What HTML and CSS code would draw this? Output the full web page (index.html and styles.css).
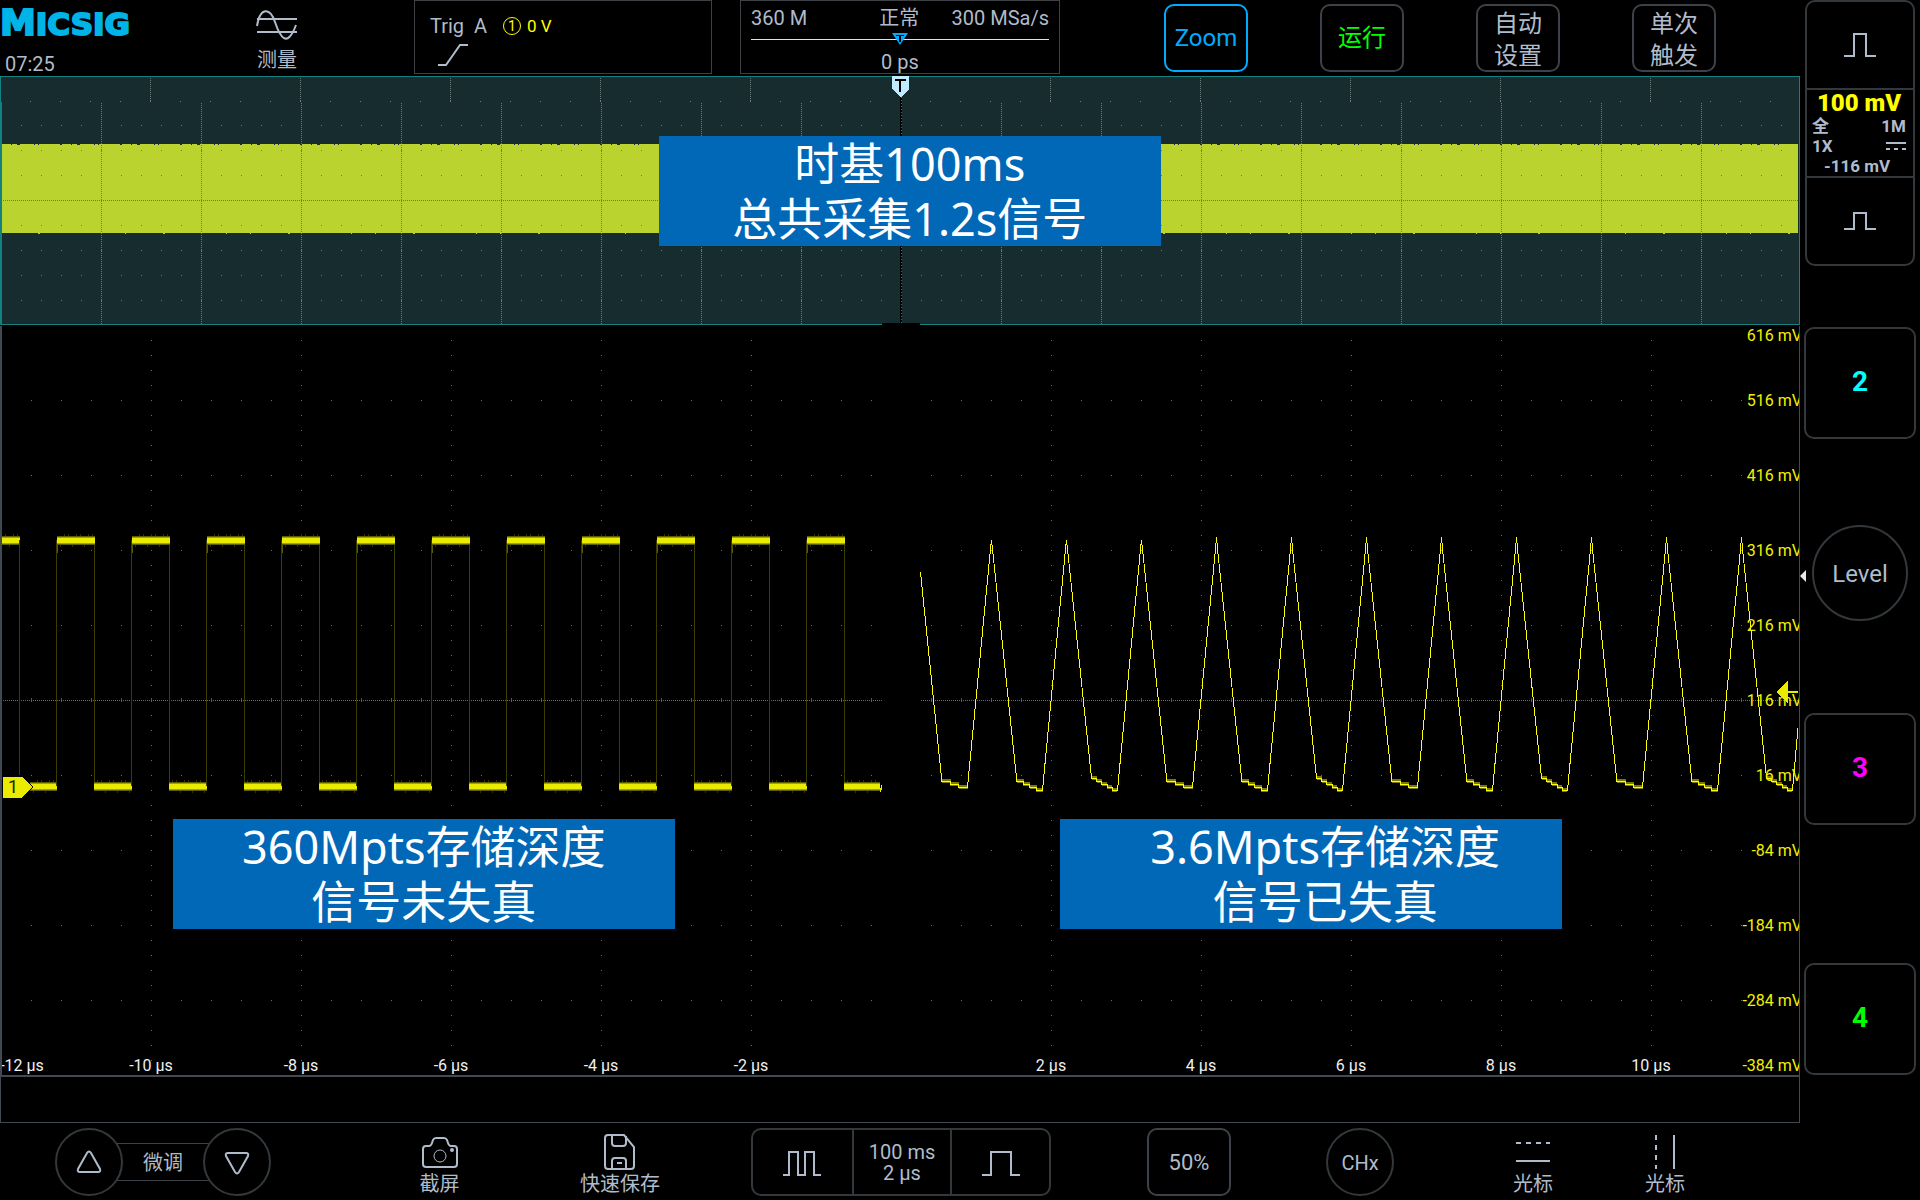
FILE: index.html
```html
<!DOCTYPE html>
<html lang="zh-CN">

<head>
  <meta charset="UTF-8" />
  <meta name="viewport" content="width=device-width, initial-scale=1.0" />
  <title>Micsig 示波器</title>
  <link rel="stylesheet" href="styles.css">
</head>

<body>
  <div class="device">
    <div class="main">

      <!-- TOP BAR -->
      <header class="topbar">
        <div class="brand">
          <div class="logo"><span>M</span>ICSIG</div>
          <time class="clock">07:25</time>
        </div>

        <button class="icon-btn measure">
          <svg width="42" height="32" viewBox="0 0 42 32">
            <path d="M1 9h40M1 22h40" />
            <path d="M1 16C4 -3 14 -3 19 12s12 27 21 3" />
          </svg>
          <span>测量</span>
        </button>

        <div class="box trigger">
          <div class="trigger-line">
            <span>Trig&nbsp; A</span>
            <span class="source">1</span>
            <span class="trig-level">0 V</span>
          </div>
          <svg width="36" height="24" viewBox="0 0 36 24">
            <path d="M0 22h8L22 2h8" />
          </svg>
        </div>

        <div class="box status">
          <div class="status-row">
            <span>360 M</span>
            <span>正常</span>
            <span>300 MSa/s</span>
          </div>
          <div class="memory-bar">
            <svg width="16" height="12" viewBox="0 0 16 12">
              <path d="M0 0h16L8 12z" />
              <path class="letter" d="M4 2h8v1H4zM7 3h2v6H7z" />
            </svg>
          </div>
          <div class="delay">0 ps</div>
        </div>

        <div class="actions">
          <button class="key active">Zoom</button>
          <button class="key run">运行</button>
          <button class="key two-line">自动<br>设置</button>
          <button class="key two-line">单次<br>触发</button>
        </div>
      </header>

      <!-- WAVEFORM SCREEN -->
      <div class="screen">
        <svg class="plot" viewBox="0 76 1800 1048">
          <defs>
            <pattern id="top-lines" x="150" y="78" width="150" height="2" patternUnits="userSpaceOnUse">
              <rect width="1" height="1" fill="#6e7f80" />
            </pattern>
            <pattern id="top-dots" x="30" y="101" width="30" height="25" patternUnits="userSpaceOnUse">
              <rect width="1" height="1" fill="#6e7f80" />
            </pattern>
            <pattern id="ov-lines" x="101" y="103" width="100" height="2" patternUnits="userSpaceOnUse">
              <rect width="1" height="1" fill="#667c7a" />
            </pattern>
            <pattern id="ov-dots" x="1" y="125" width="20" height="25" patternUnits="userSpaceOnUse">
              <rect width="1" height="1" fill="#667c70" />
            </pattern>
            <pattern id="rows" x="1" y="400" width="30" height="75" patternUnits="userSpaceOnUse">
              <rect width="1" height="1" fill="#6a6a6a" />
            </pattern>
            <pattern id="cols" x="151" y="400" width="150" height="15" patternUnits="userSpaceOnUse">
              <rect width="1" height="1" fill="#6a6a6a" />
            </pattern>
            <pattern id="ticks" x="1" y="698" width="30" height="5" patternUnits="userSpaceOnUse">
              <rect width="1" height="4" fill="#555" />
            </pattern>
          </defs>

          <!-- overview window -->
          <rect x="0" y="76" width="1800" height="249" fill="#172c2e" />
          <rect x="0" y="144" width="1798" height="89" fill="#bad32f" />
          <path d="M0 144.5H1798" stroke="#172c2e" stroke-dasharray="2 9 1 5 3 14 1 3 1 21" />
          <path d="M0 233.5H1798" stroke="#bad32f" stroke-dasharray="1 37 2 61 1 23" />
          <rect x="1" y="78" width="1797" height="24" fill="url(#top-lines)" />
          <rect x="1" y="101" width="1797" height="1" fill="url(#top-dots)" />
          <rect x="1" y="103" width="1797" height="221" fill="url(#ov-lines)" />
          <rect x="1" y="103" width="1797" height="221" fill="url(#ov-dots)" />
          <path d="M1 200.5H1799" stroke="#667c60" stroke-dasharray="1 1" />
          <rect x="0.5" y="76.5" width="1799" height="248" fill="none" stroke="#158080" />
          <rect x="0" y="102" width="2" height="222" fill="#158080" />
          <rect x="900" y="97" width="2" height="227" fill="#000" />
          <path d="M901.5 97V324" stroke="#6e6862" stroke-dasharray="1 2" />

          <!-- zoomed window -->
          <rect x="3" y="327" width="1796" height="748" fill="url(#rows)" />
          <rect x="3" y="337" width="1796" height="730" fill="url(#cols)" />
          <rect x="3" y="698" width="1796" height="5" fill="url(#ticks)" />
          <path d="M3 700.5H1799" stroke="#6a6a6a" stroke-dasharray="1 1" />
          <rect x="882" y="323" width="38" height="750" fill="#000" />

          <g id="fine-trace"></g>
          <g id="coarse-trace"></g>

          <g class="volts">
            <text x="1802" y="341">616 mV</text>
            <text x="1802" y="406">516 mV</text>
            <text x="1802" y="481">416 mV</text>
            <text x="1802" y="556">316 mV</text>
            <text x="1802" y="631">216 mV</text>
            <text x="1802" y="706">116 mV</text>
            <text x="1802" y="781">16 mV</text>
            <text x="1802" y="856">-84 mV</text>
            <text x="1802" y="931">-184 mV</text>
            <text x="1802" y="1006">-284 mV</text>
            <text x="1802" y="1071">-384 mV</text>
          </g>
          <g class="times">
            <text x="22" y="1071">-12 µs</text>
            <text x="151" y="1071">-10 µs</text>
            <text x="301" y="1071">-8 µs</text>
            <text x="451" y="1071">-6 µs</text>
            <text x="601" y="1071">-4 µs</text>
            <text x="751" y="1071">-2 µs</text>
            <text x="1051" y="1071">2 µs</text>
            <text x="1201" y="1071">4 µs</text>
            <text x="1351" y="1071">6 µs</text>
            <text x="1501" y="1071">8 µs</text>
            <text x="1651" y="1071">10 µs</text>
          </g>

          <!-- frame -->
          <path d="M1 326V1076H1799" fill="none" stroke="#434953" stroke-width="2" />
          <path d="M1799.5 326V1122.5H0.5V1077" fill="none" stroke="#434953" />

          <!-- markers -->
          <path d="M892 76h17v13l-8 8h-1l-8-8z" fill="#c0ebff" />
          <path d="M895 80h11M900 80v12" stroke="#000" stroke-width="2" />
          <path d="M2 776h20l11 11-11 11H2z" fill="#ebeb00" stroke="#000" />
          <text class="marker" x="13" y="793">1</text>
          <path d="M1776 692l12-12v11h10v2h-10v11z" fill="#ebeb00" />
        </svg>

        <div class="note note-total">时基100ms<br>总共采集1.2s信号</div>
        <div class="note note-deep">360Mpts存储深度<br>信号未失真</div>
        <div class="note note-shallow">3.6Mpts存储深度<br>信号已失真</div>
      </div>

      <!-- BOTTOM BAR -->
      <footer class="bottombar">
        <div class="stepper">
          <button class="round" aria-label="上调">
            <svg width="28" height="26" viewBox="0 0 28 26">
              <path d="M12 4Q14 1 16 4L25 20Q26 23 23 23H5Q2 23 3 20z" />
            </svg>
          </button>
          <span class="stepper-label">微调</span>
          <button class="round" aria-label="下调">
            <svg width="28" height="26" viewBox="0 0 28 26">
              <path d="M12 23Q14 26 16 23L25 7Q26 4 23 4H5Q2 4 3 7z" />
            </svg>
          </button>
        </div>

        <button class="icon-btn">
          <svg width="38" height="34" viewBox="0 0 38 34">
            <path d="M5 10h3q2 0 3-3l1-3q1-2 3-2h8q2 0 3 2l1 3q1 3 3 3h3q3 0 3 3v15q0 3-3 3H5q-3 0-3-3V13q0-3 3-3z" />
            <circle cx="19" cy="20" r="6" stroke-width="1" />
            <circle cx="31" cy="14" r="1" />
          </svg>
          <span>截屏</span>
        </button>

        <button class="icon-btn">
          <svg width="34" height="36" viewBox="0 0 34 36">
            <path d="M5 1h16l10 12v19q0 3-3 3H5q-3 0-3-3V4q0-3 3-3z" />
            <path d="M9 1v8q0 3 3 3h8q3 0 3-3V2M9 35v-8q0-3 3-3h8q3 0 3 3v8M14 29h5" />
          </svg>
          <span>快速保存</span>
        </button>

        <div class="timebase">
          <button aria-label="压缩时基">
            <svg width="40" height="26" viewBox="0 0 40 26">
              <path d="M1 25h6V2h9v23h7V2h9v23h7" />
            </svg>
          </button>
          <button>100 ms<br>2 µs</button>
          <button aria-label="展开时基">
            <svg width="40" height="26" viewBox="0 0 40 26">
              <path d="M1 25h9V2h20v23h9" />
            </svg>
          </button>
        </div>

        <button class="key half">50%</button>
        <button class="round chx">CHx</button>

        <button class="icon-btn">
          <svg width="36" height="36" viewBox="0 0 36 36">
            <path d="M1 9h34" stroke-dasharray="5 5" />
            <path d="M1 27h34" />
          </svg>
          <span>光标</span>
        </button>

        <button class="icon-btn">
          <svg width="36" height="36" viewBox="0 0 36 36">
            <path d="M9 1v34" stroke-dasharray="5 5" />
            <path d="M27 1v34" />
          </svg>
          <span>光标</span>
        </button>
      </footer>
    </div>

    <!-- CHANNEL COLUMN -->
    <aside class="channels">
      <div class="channel-one">
        <button aria-label="增大垂直档位">
          <svg width="32" height="26" viewBox="0 0 32 26">
            <path d="M0 24h10V2h12v22h10" />
          </svg>
        </button>
        <button class="channel-info">
          <strong>100 mV</strong>
          <span class="pair"><span>全</span><span>1M</span></span>
          <span class="pair">
            <span>1X</span>
            <svg width="20" height="8" viewBox="0 0 20 8">
              <path d="M0 1h20" />
              <path d="M0 7h20" stroke-dasharray="4 4" />
            </svg>
          </span>
          <span class="offset">-116 mV</span>
        </button>
        <button aria-label="减小垂直档位">
          <svg width="32" height="20" viewBox="0 0 32 20">
            <path d="M0 18h10V2h12v16h10" />
          </svg>
        </button>
      </div>
      <button class="channel ch2">2</button>
      <button class="level">Level</button>
      <button class="channel ch3">3</button>
      <button class="channel ch4">4</button>
    </aside>
  </div>

  <script src="script.js"></script>
</body>

</html>
```
FILE: styles.css
```css
/* Base Reset & Body */
* {
  margin: 0;
  padding: 0;
  box-sizing: border-box;
}

body {
  background: #000;
  color: #b0bccb;
  font-family: Roboto, 'Noto Sans CJK SC', sans-serif;
  font-size: 20px;
  line-height: 24px;
}

button {
  background: none;
  border: none;
  color: inherit;
  font: inherit;
  cursor: pointer;
}

svg {
  display: block;
  fill: none;
  stroke: #b0bccb;
  stroke-width: 2;
}

.device {
  display: grid;
  grid-template-columns: minmax(0, 1fr) 120px;
}

/* Top bar */
.topbar {
  display: grid;
  grid-template-columns: 140fr 274fr 298fr 348fr 740fr;
  height: 76px;
}

.brand {
  padding-top: 6px;
}

.logo {
  height: 46px;
  color: #00b4e8;
  font: bold 31px/34px 'DejaVu Sans', sans-serif;
  -webkit-text-stroke: 2px #00b4e8;
  white-space: nowrap;
}

.logo span {
  font-size: 36px;
}

.clock {
  display: block;
  padding-left: 5px;
}

.icon-btn {
  display: flex;
  flex-direction: column;
  align-items: center;
  justify-self: center;
  gap: 2px;
}

.measure {
  padding-top: 10px;
  gap: 6px;
}

.box {
  height: 74px;
  border: 1px solid #3d4044;
}

.trigger {
  padding: 13px 15px;
}

.trigger svg {
  margin: 5px 0 0 8px;
}

.trigger-line {
  display: flex;
  align-items: center;
}

.source {
  width: 18px;
  height: 18px;
  margin: 0 6px 0 16px;
  border: 1px solid #ff0;
  border-radius: 50%;
  color: #ff0;
  font-size: 14px;
  line-height: 16px;
  text-align: center;
}

.trig-level {
  color: #ff0;
  font-size: 17px;
}

.status {
  margin-left: 28px;
  padding: 5px 10px 0;
}

.status-row {
  display: flex;
  justify-content: space-between;
}

.status-row span:nth-child(2) {
  padding-left: 40px;
}

.memory-bar {
  display: flex;
  justify-content: center;
  height: 12px;
  margin-top: 3px;
  background: linear-gradient(#ff0, #ff0) center / 100% 1px no-repeat;
}

.memory-bar svg {
  fill: #00aaff;
  stroke: none;
}

.memory-bar .letter {
  fill: #000;
}

.delay {
  margin-top: 5px;
  text-align: center;
}

.actions {
  display: flex;
  justify-content: space-around;
  padding: 4px 48px 0 68px;
}

.key {
  width: 84px;
  height: 68px;
  border: 2px solid #3d4248;
  border-radius: 10px;
  font-size: 24px;
  line-height: 32px;
}

.two-line {
  padding-top: 2px;
}

.active {
  border-color: #00aaff;
  color: #00aaff;
}

.run {
  color: #0f0;
}

/* Waveform screen */
.screen {
  position: relative;
}

.plot {
  width: 100%;
  height: auto;
  stroke: none;
  stroke-width: 1;
  shape-rendering: crispEdges;
}

.plot text {
  font-size: 16px;
}

.volts {
  fill: #f0f000;
  text-anchor: end;
}

.times {
  fill: #f0f0f0;
  text-anchor: middle;
}

.plot .marker {
  fill: #222200;
  font-size: 18px;
  text-anchor: middle;
}

/* Blue captions laid over the waveforms */
.note {
  position: absolute;
  width: 502px;
  height: 110px;
  background: #0068b7;
  color: #fff;
  font-family: 'Noto Sans', 'Noto Sans CJK SC', sans-serif;
  font-size: 45px;
  line-height: 55px;
  text-align: center;
  white-space: nowrap;
}

.note-total {
  left: 36.6%;
  top: 60px;
}

.note-deep {
  left: 9.6%;
  top: 70.9%;
}

.note-shallow {
  left: 58.9%;
  top: 70.9%;
  padding-left: 28px;
}

/* Bottom bar */
.bottombar {
  display: grid;
  grid-template-columns: 326fr 227fr 134fr 428fr 148fr 194fr 152fr 112fr 79fr;
  align-items: start;
  justify-items: center;
  height: 76px;
  padding-top: 4px;
}

.bottombar .icon-btn {
  justify-content: flex-end;
  height: 68px;
  white-space: nowrap;
}

.stepper {
  display: flex;
  align-items: center;
}

.stepper-label {
  width: 92px;
  height: 38px;
  margin: 0 -6px;
  border: 1px solid #3d4248;
  border-width: 1px 0;
  line-height: 38px;
  text-align: center;
}

.round {
  display: flex;
  align-items: center;
  justify-content: center;
  width: 68px;
  height: 68px;
  border: 2px solid #33383c;
  border-radius: 50%;
  background: #000;
}

.chx,
.half {
  padding-top: 2px;
}

.timebase {
  display: grid;
  grid-template-columns: repeat(3, 1fr);
  width: 300px;
  height: 68px;
  border: 2px solid #33383c;
  border-radius: 10px;
}

.timebase button {
  display: flex;
  align-items: center;
  justify-content: center;
  padding-top: 2px;
  line-height: 21px;
}

.timebase button + button {
  border-left: 2px solid #33383c;
}

.half {
  font-size: 22px;
}

/* Channel column */
.channels {
  display: flex;
  flex-direction: column;
  align-items: center;
}

.channel-one {
  display: grid;
  grid-template-rows: 86px 88px 88px;
  width: 110px;
  height: 266px;
  border: 2px solid #33383c;
  border-radius: 10px;
}

.channel-one button {
  display: flex;
  align-items: center;
  justify-content: center;
}

.channel-one button + button {
  border-top: 2px solid #33383c;
}

.channel-one .channel-info {
  flex-direction: column;
  align-items: stretch;
  padding: 0 7px 0 5px;
  font-size: 17px;
  font-weight: 700;
  line-height: 20px;
}

.channel-info strong {
  color: #ff0;
  font-size: 24px;
  line-height: 26px;
}

.offset {
  padding-right: 4px;
}

.pair {
  display: flex;
  align-items: center;
  justify-content: space-between;
}

.channel {
  width: 112px;
  height: 112px;
  padding-bottom: 2px;
  border: 2px solid #33383c;
  border-radius: 10px;
  font-size: 28px;
  font-weight: 700;
}

.ch2 {
  margin-top: 61px;
  color: #0ff;
}

.ch3 {
  margin-top: 92px;
  color: #f0f;
}

.ch4 {
  margin-top: 138px;
  color: #0f0;
}

.level {
  position: relative;
  width: 96px;
  height: 96px;
  margin-top: 86px;
  padding-top: 2px;
  border: 2px solid #33383c;
  border-radius: 50%;
  font-size: 24px;
}

.level::before {
  content: '';
  position: absolute;
  left: -14px;
  top: 43px;
  border: 6px solid transparent;
  border-right-color: #e6e6e6;
  border-left-width: 0;
}
```
FILE: script.js
```js
const SVG_NS = 'http://www.w3.org/2000/svg';
const fine = document.getElementById('fine-trace');
const coarse = document.getElementById('coarse-trace');

function rect(parent, x, y, width, height, fill) {
  const el = document.createElementNS(SVG_NS, 'rect');
  Object.entries({ x, y, width, height, fill }).forEach(([k, v]) => el.setAttribute(k, v));
  parent.appendChild(el);
}

// thick glowing level of the square wave, with a little noise on both sides
function level(x1, x2, y) {
  const w = x2 - x1;
  rect(fine, x1, y - 4, w, 9, '#5c5c00');
  rect(fine, x1, y - 3, w, 7, '#a3a300');
  rect(fine, x1, y - 2, w, 5, '#ebeb00');
  for (let i = 3; i < w - 1; i += 4) {
    const up = (x1 + i) % 3 !== 0;
    rect(fine, x1 + i, up ? y - 6 : y + 5, 1, 2, '#333300');
  }
}

const HIGH = 540;
const LOW = 786;

level(2, 20, HIGH);
rect(fine, 19, HIGH, 1, 235, '#3d3d00');
level(30, 57, LOW);
for (let k = 0; k < 11; k++) {
  const x = 57 + k * 75;
  rect(fine, x - 1, HIGH, 1, LOW - HIGH, '#3d3d00');
  rect(fine, x + 37, HIGH, 1, LOW - HIGH, '#3d3d00');
  level(x, x + 38, HIGH);
  // slow settling just after the rising edge
  rect(fine, x, HIGH + 5, 1, 8, '#5c5c00');
  level(x + 37, Math.min(x + 75, 880), LOW);
}
rect(fine, 880, 788, 1, 4, '#ebeb00');
rect(fine, 881, 785, 1, 5, '#ebeb00');

// undersampled copy: spikes joined by a short falling staircase
let d = 'M920.5 572L941.5 778V781';
for (let k = 0; k < 12; k++) {
  const x = 941.5 + k * 75;
  const steps = k % 3 === 0 ? [781, 784, 787] : k % 3 === 1 ? [781, 784, 787, 790] : [778, 781, 784, 787, 790];
  const w = 26 / steps.length;
  steps.forEach((y, i) => {
    d += `V${y}H${x + (i + 1) * w}`;
    // soft edge under each step
    rect(coarse, Math.round(x + i * w), y - 2, Math.round(w), 4, '#7a7a00');
  });
  if (k === 11) {
    d += 'L1798 728';
    break;
  }
  const top = k < 3 ? 540 : 537;
  d += `L${x + 49} 549L${x + 50} ${top}L${x + 51} 549L${x + 75} 778`;
}
const path = document.createElementNS(SVG_NS, 'path');
path.setAttribute('d', d);
path.setAttribute('fill', 'none');
path.setAttribute('stroke', '#ff0');
coarse.appendChild(path);
```
